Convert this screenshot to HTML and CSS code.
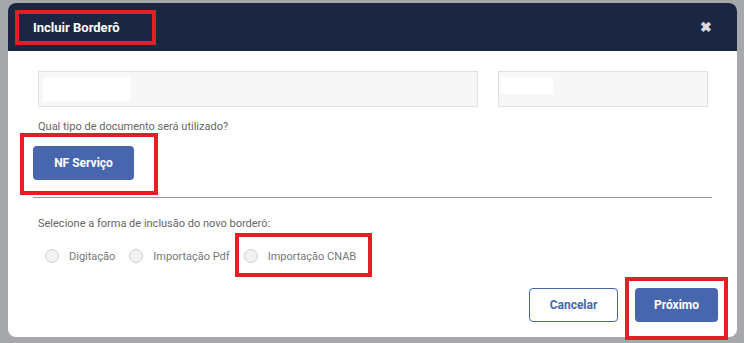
FILE: index.html
```html
<!DOCTYPE html>
<html lang="pt-BR">
<head>
  <meta charset="UTF-8">
  <meta name="viewport" content="width=device-width, initial-scale=1.0">
  <title>Incluir Borderô</title>
  <link rel="stylesheet" href="styles.css">
</head>
<body>

  <div class="page">
    <div class="modal">
      <div class="modal-header">
        <h2 class="modal-title">Incluir Borderô</h2>
        <span class="modal-close">&#10006;</span>
      </div>

      <div class="modal-body">
        <div class="fields">
          <div class="field field-main"><span class="mask mask-main"></span></div>
          <div class="field field-side"><span class="mask mask-side"></span></div>
        </div>

        <p class="label">Qual tipo de documento será utilizado?</p>
        <button class="btn btn-primary btn-type">NF Serviço</button>

        <hr class="divider">

        <p class="label label-mode">Selecione a forma de inclusão do novo borderô:</p>
        <div class="radios">
          <label class="radio"><span class="dot"></span>Digitação</label>
          <label class="radio"><span class="dot"></span>Importação Pdf</label>
          <label class="radio"><span class="dot"></span>Importação CNAB</label>
        </div>
      </div>

      <div class="modal-footer">
        <button class="btn btn-outline">Cancelar</button>
        <button class="btn btn-primary btn-next">Próximo</button>
      </div>
    </div>

    <!-- marcações em vermelho -->
    <div class="mark mark-title"></div>
    <div class="mark mark-type"></div>
    <div class="mark mark-cnab"></div>
    <div class="mark mark-next"></div>
  </div>

</body>
</html>
```

FILE: styles.css
```css
* {
  margin: 0;
  padding: 0;
  box-sizing: border-box;
}

body {
  background-color: #a7a8ab;
  font-family: Roboto, "Liberation Sans", sans-serif;
}

.page {
  position: relative;
  width: 744px;
  height: 343px;
  padding: 3px 7px 6px 8px;
}

.modal {
  display: flex;
  flex-direction: column;
  height: 334px;
  background-color: #fff;
  border-radius: 8px;
  overflow: hidden;
}

.modal-header {
  display: flex;
  align-items: center;
  justify-content: space-between;
  height: 48px;
  padding: 0 25px 0 25px;
  background-color: #1b2742;
}

.modal-title {
  color: #fff;
  font-size: 13px;
  font-weight: 700;
}

.modal-close {
  color: #d9dbe0;
  font-size: 14px;
  font-weight: 700;
  line-height: 1;
}

.modal-body {
  flex: 1;
  padding: 20px 29px 0 30px;
}

.fields {
  display: flex;
  gap: 20px;
}

.field {
  height: 36px;
  padding: 5px 4px;
  background-color: #f7f7f7;
  border: 1px solid #e2e2e2;
}

.field-main {
  width: 440px;
}

.field-side {
  width: 210px;
  padding-left: 2px;
}

.mask {
  display: block;
  background-color: #fff;
}

.mask-main {
  width: 87px;
  height: 24px;
}

.mask-side {
  width: 52px;
  height: 17px;
}

.label {
  margin-top: 12px;
  color: #666;
  font-size: 11px;
  line-height: 15px;
}

.btn {
  height: 34px;
  font-family: inherit;
  font-size: 12px;
  font-weight: 700;
  border-radius: 4px;
  cursor: pointer;
}

.btn-primary {
  color: #fff;
  background-color: #4766ae;
  border: none;
}

.btn-outline {
  width: 89px;
  color: #4766ae;
  background-color: #fff;
  border: 1px solid #4766ae;
}

.btn-type {
  width: 101px;
  margin: 12px 0 0 -5px;
}

.divider {
  margin: 17px -4px 0 -5px;
  border: none;
  border-top: 1px solid #9a9a9a;
}

.label-mode {
  margin-top: 18px;
}

.radios {
  display: flex;
  gap: 14px;
  margin: 18px 0 0 7px;
}

.radio {
  display: flex;
  align-items: center;
  gap: 10px;
  color: #777;
  font-size: 11px;
}

.dot {
  width: 14px;
  height: 14px;
  background-color: #f2f2f2;
  border: 1px solid #cfcfcf;
  border-radius: 50%;
}

.modal-footer {
  display: flex;
  justify-content: flex-end;
  gap: 17px;
  padding: 0 19px 15px 0;
}

.btn-next {
  width: 83px;
}

.mark {
  position: absolute;
  border: 4px solid #e31e24;
}

.mark-title {
  left: 15px;
  top: 10px;
  width: 141px;
  height: 35px;
}

.mark-type {
  left: 20px;
  top: 133px;
  width: 138px;
  height: 62px;
}

.mark-cnab {
  left: 235px;
  top: 233px;
  width: 137px;
  height: 44px;
}

.mark-next {
  left: 625px;
  top: 277px;
  width: 103px;
  height: 63px;
}
```
